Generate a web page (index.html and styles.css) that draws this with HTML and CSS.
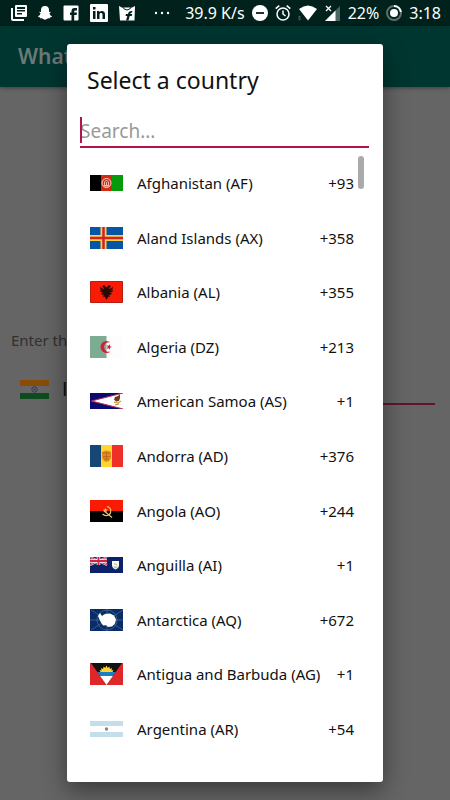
FILE: index.html
```html
<!DOCTYPE html>
<html lang="en">
<head>
<meta charset="utf-8">
<meta name="viewport" content="width=device-width, initial-scale=1">
<title>Select a country</title>
<link rel="stylesheet" href="styles.css">
</head>
<body>
<header class="status">
  <div class="notices">
    <svg width="16" height="16" viewBox="0 0 16 16"><path fill="#fff" fill-rule="evenodd" d="M5 0h10a1 1 0 0 1 1 1v10a1 1 0 0 1-1 1H5a1 1 0 0 1-1-1V1a1 1 0 0 1 1-1zm1 2v2h8V2zm0 3v1.500h8V5zm0 3v1.500h5V8z"/><path fill="none" stroke="#fff" stroke-width="2" d="M1 3v11q0 1 1 1h11"/></svg>
    <svg width="14" height="16" viewBox="0 0 14 16"><path fill="#fff" d="M7 1c3 0 4 2 4 4v2l1.500-.3c.6.4.2 1-1 1.500.3 1.600 1.200 2.500 2.500 3 .2.900-1 1-2 1.200l-.4 1c-1.200-.2-2-.1-2.800.6-1.100.9-2.500.9-3.600 0-.8-.7-1.600-.8-2.800-.6l-.4-1c-1-.2-2.200-.3-2-1.200 1.300-.5 2.200-1.400 2.500-3-1.200-.5-1.600-1.100-1-1.500L3 7V5c0-2 1-4 4-4z"/></svg>
    <svg width="16" height="16" viewBox="0 0 16 16"><rect width="15" height="15" x=".5" y=".5" rx="1" fill="#fff"/><path fill="#00211c" d="M8.500 16v-6H7V7.500h1.500V6q0-3 3-3H14v2.500h-1.500q-1.300 0-1.300 1v1H14l-.4 2.500h-2.400v6z"/></svg>
    <svg width="18" height="18" viewBox="0 0 18 18"><rect width="18" height="18" rx="1" fill="#fff"/><path fill="#00211c" d="M3 7h2.500v8H3zM3 3h2.500v2.500H3zM7 7h2.300v1.200C11 6 15 6.500 15 10v5h-2.500v-4.500c0-2-3-2-3 0V15H7z"/></svg>
    <svg width="16" height="16" viewBox="0 0 16 16"><path fill="#fff" d="M0 1l3 1.500h10L16 1l-.5 14.500H1z"/><path fill="none" stroke="#00211c" d="M3 1q2 4 5 4t5-4"/><path fill="#00211c" d="M7 15.500l1.300-4.500H6.500l.5-2h2q.5-3 3.500-3h1L13 7.500q-1.600 0-1.800 1.500h2l-.5 2h-2l-1.200 4.500z"/></svg>
    <svg class="more" width="16" height="16" viewBox="0 0 16 16"><g fill="#fff"><circle cx="2" cy="8" r="1.200"/><circle cx="8" cy="8" r="1.200"/><circle cx="14" cy="8" r="1.200"/></g></svg>
  </div>
  <div class="system">
    <span>39.9 K/s</span>
    <svg width="16" height="16" viewBox="0 0 16 16"><circle cx="8" cy="8" r="8" fill="#fff"/><path stroke="#00211c" stroke-width="1.800" d="M4 8h8"/></svg>
    <svg width="16" height="16" viewBox="0 0 16 16"><g fill="none" stroke="#fff" stroke-width="1.500"><circle cx="8" cy="9" r="6"/><path d="M8 5.500V9l2.500 2M.7 3.700l3.600-3M15.300 3.700l-3.600-3"/></g></svg>
    <svg width="20" height="16" viewBox="0 0 20 16"><path fill="#fff" d="M1 4Q10-3 19 4L10 15.500z"/><path fill="#56706c" d="M0 12.500l1.500-2 1.500 2zM0 13.500l1.500 2 1.500-2z"/></svg>
    <svg width="16" height="16" viewBox="0 0 16 16"><path fill="#4c6562" d="M15 1v15H0z"/><path fill="#fff" d="M10.500 5.500V16H0z"/><path stroke="#fff" stroke-width="1.300" d="M1 1l5 5M6 1L1 6"/></svg>
    <span>22%</span>
    <svg width="16" height="16" viewBox="0 0 16 16"><circle cx="8" cy="8" r="7" fill="none" stroke="#5c6f6c" stroke-width="2"/><path fill="none" stroke="#fff" stroke-width="2" d="M8 1a7 7 0 0 1 6.900 6"/><circle cx="8" cy="8" r="4" fill="#fff"/></svg>
    <span>3:18</span>
  </div>
</header>
<div class="appbar">WhatsApp</div>
<main class="page">
  <p class="prompt">Enter the</p>
  <div class="phone">
    <svg width="29" height="19" viewBox="0 0 29 19"><path fill="#666" d="M0 0h29v19H0z"/><path fill="#884c08" d="M0 0h29v6H0z"/><path fill="#104a20" d="M0 13h29v6H0z"/><circle cx="14.500" cy="9.500" r="2.700" fill="none" stroke="#343a55"/><circle cx="14.500" cy="9.500" r="1" fill="#343a55"/></svg>
    <span class="chosen">India</span>
    <span class="rule"></span>
  </div>
</main>

<section class="dialog" role="dialog" aria-labelledby="title">
  <h1 id="title">Select a country</h1>
  <div class="search"><input type="text" aria-label="Search countries" placeholder="Search..."><i class="caret"></i></div>
  <ul class="list">
    <li><button><svg width="33" height="16" viewBox="0 0 33 16"><path d="M0 0h11v16H0z"/><path fill="#d32a12" d="M11 0h11v16H11z"/><path fill="#069a0c" d="M22 0h11v16H22z"/><g fill="none" stroke="#fbd5cc"><circle cx="16.500" cy="8" r="4.500"/><path stroke-width=".8" d="M14.500 10.500V7l2-2 2 2v3.500zM13.500 11h6M16.500 7v3"/></g></svg><span class="name">Afghanistan (AF)</span><span>+93</span></button></li>
    <li><button><svg width="33" height="22" viewBox="0 0 33 22"><path fill="#0755a5" d="M0 0h33v22H0z"/><path stroke="#ffd044" stroke-width="6" d="M13.500 0v22M0 11h33"/><path stroke="#d2202b" stroke-width="2.500" d="M13.500 0v22M0 11h33"/></svg><span class="name">Aland Islands (AX)</span><span>+358</span></button></li>
    <li><button><svg width="33" height="22" viewBox="0 0 33 22"><path fill="#fb1b05" stroke="#b32013" d="M.5.5h32v21H.5z"/><path fill="#290805" d="M16.500 6.500L14 4l-2 1.500 2 1.500-.5 1L10 6l.5 2.500 2.500 1-3-.2.800 2 2.500.2-2 1 1 1.500 2-.5-1.500 2 2 .2 1.700 3.300 1.700-3.300 2-.2-1.500-2 2 .5 1-1.500-2-1 2.500-.2.800-2-3 .2 2.500-1L23 6l-3.500 2-.5-1 2-1.500L19 4z"/></svg><span class="name">Albania (AL)</span><span>+355</span></button></li>
    <li><button><svg width="33" height="22" viewBox="0 0 33 22"><path fill="#fdfdfd" d="M16 0h17v22H16z"/><path fill="#7dac92" d="M0 0h16.500v22H0z"/><path fill="#d5203d" d="M20.500 6.500a6 6 0 1 0 0 9 4.800 4.800 0 1 1 0-9zM22 11l-2 .8.100 2.200-1.400-1.700-2.100.6 1.200-1.900-1.200-1.800 2.100.5 1.400-1.700-.1 2.200z"/></svg><span class="name">Algeria (DZ)</span><span>+213</span></button></li>
    <li><button><svg width="33" height="16" viewBox="0 0 33 16"><path fill="#0b0870" d="M0 0h33v16H0z"/><path fill="#fff" stroke="#b83253" d="M34-.2L1.500 8 34 16.200z"/><path fill="#6d3a16" d="M25 4l3-1 2-2v4l-1 3-3 .5-2-2z"/><path fill="none" stroke="#b68624" d="M24 9l4 1 3-2M25 12l4-1"/></svg><span class="name">American Samoa (AS)</span><span>+1</span></button></li>
    <li><button><svg width="33" height="22" viewBox="0 0 33 22"><path fill="#154675" d="M0 0h11v22H0z"/><path fill="#ffd52e" d="M11 0h11v22H11z"/><path fill="#ee3028" d="M22 0h11v22H22z"/><path fill="#e48b1c" d="M12 7q4.500-3 9 0v6q-1 3-4.500 4-3.500-1-4.500-4z"/><path stroke="#b8661c" stroke-width=".8" d="M13 8h7M13 11.500h7M16.500 7v8M14 14h5"/></svg><span class="name">Andorra (AD)</span><span>+376</span></button></li>
    <li><button><svg width="33" height="22" viewBox="0 0 33 22"><path d="M0 0h33v22H0z"/><path fill="#fb1b05" d="M0 0h33v11H0z"/><g fill="none" stroke="#edc474" stroke-width="1.200"><path d="M17 6.500c5 1 5 8 0 9-2 .3-3.500-.5-4.500-1.500M13.500 10.500l8.500 7"/></g><path fill="#edc474" d="M15.500 8l.6 1.500 1.600.1-1.200 1 .4 1.600-1.400-.9-1.400.9.400-1.600-1.200-1 1.600-.1z"/></svg><span class="name">Angola (AO)</span><span>+244</span></button></li>
    <li><button><svg width="33" height="16" viewBox="0 0 33 16"><path fill="#0b2268" d="M0 0h33v16H0z"/><path stroke="#eed5df" stroke-width="2" d="M0 0l17 8M17 0L0 8"/><path stroke="#d43350" d="M0 0l17 8M17 0L0 8"/><path stroke="#fff" stroke-width="3.500" d="M8.500 0v8M0 4h17"/><path stroke="#d02440" stroke-width="2" d="M8.500 0v8M0 4h17"/><path fill="#f5f7f6" d="M22 4h7v4q0 3-3.500 4.500Q22 11 22 8z"/><path fill="#92cfd6" d="M23 9.500h5q-1 1.500-2.500 2.300Q24 11 23 9.500z"/><path stroke="#e7a04e" d="M24 6.500l3 1.500"/></svg><span class="name">Anguilla (AI)</span><span>+1</span></button></li>
    <li><button><svg width="33" height="22" viewBox="0 0 33 22"><path fill="#082d66" d="M0 0h33v22H0z"/><g fill="none" stroke="#5978a1" stroke-width=".6"><circle cx="17" cy="11" r="10"/><circle cx="17" cy="11" r="6"/><path d="M0 11h33M17 0v22M1 1l32 20M33 1L1 21"/></g><path fill="#fff" d="M10 4l2 3 3-2 5-.5 4 2 2 4-1 4-3 3-4 .5-2-2-3 .5-2-3-1.500-3L8 7z"/></svg><span class="name">Antarctica (AQ)</span><span>+672</span></button></li>
    <li><button><svg width="33" height="22" viewBox="0 0 33 22"><path fill="#df2629" d="M0 0h33v22H0z"/><path fill="#111" d="M1 0h31L16.500 22z"/><path fill="#ffd42f" d="M10.500 9l-1-2 2 .5-.5-2.500 2 1 .7-2.500 1.500 1.500 1.300-2.500 1.300 2.500 1.500-1.500.7 2.500 2-1-.5 2.500 2-.5-1 2z"/><path fill="#1680c4" d="M7.300 9h18.400L22.900 13H10.100z"/><path fill="#fff" d="M10.100 13h12.800L16.500 22z"/></svg><span class="name">Antigua and Barbuda (AG)</span><span>+1</span></button></li>
    <li><button><svg width="33" height="16" viewBox="0 0 33 16"><path fill="#fff" d="M0 0h33v16H0z"/><path fill="#c5deeb" d="M0 0h33v5H0zM0 11h33v5H0z"/><circle cx="16.500" cy="8" r="1.700" fill="#928767"/></svg><span class="name">Argentina (AR)</span><span>+54</span></button></li>
  </ul>
</section>
</body>
</html>
```

FILE: styles.css
```css
* { box-sizing: border-box; }

body {
  margin: 0;
  min-height: 100vh;
  background: #656565;
  color: #111;
  font-family: "Noto Sans", sans-serif;
  font-size: 15px;
}

svg { display: block; flex: none; }

.status {
  display: flex;
  justify-content: space-between;
  align-items: center;
  height: 26px;
  padding: 0 9px 0 11px;
  background: #00211c;
  color: #fff;
  font-size: 16px;
  white-space: nowrap;
}

.notices { display: flex; align-items: center; gap: 11px; }
.more { margin-left: 8px; }
.system { display: flex; align-items: center; gap: 7px; }

.appbar {
  height: 61px;
  padding: 0 18px;
  background: #003630;
  box-shadow: 0 1px 4px rgba(0, 0, 0, .4);
  color: #6b7977;
  font-size: 21px;
  font-weight: 600;
  line-height: 61px;
}

.page { padding: 240px 15px 0 11px; }
.prompt { margin: 0; color: #303030; line-height: 26px; }
.phone { display: flex; align-items: center; margin-top: 20px; padding-left: 9px; gap: 13px; }
.chosen { font: 20px/32px "Liberation Sans", sans-serif; }
.rule {
  flex: 1;
  align-self: flex-end;
  height: 2px;
  background: #62142f;
}

.dialog {
  position: absolute;
  inset: 44px 67px 18px;
  display: flex;
  flex-direction: column;
  padding: 16px 14px 26px 13px;
  background: #fff;
  border-radius: 3px;
  box-shadow: 0 8px 24px rgba(0, 0, 0, .45);
}

h1 {
  margin: 0;
  padding-left: 7px;
  font-size: 23px;
  font-weight: 400;
  line-height: 40px;
}

.search { position: relative; margin-top: 16px; }
.search input {
  display: block;
  width: 100%;
  height: 32px;
  padding: 0;
  border: 0;
  border-bottom: 2px solid #b3124f;
  outline: 0;
  background: none;
  font: 19px "Noto Sans", sans-serif;
}
.search input::placeholder { color: #999; opacity: 1; }
.caret {
  position: absolute;
  left: 0;
  top: 1px;
  width: 2px;
  height: 26px;
  background: #b3124f;
}

.list {
  position: relative;
  flex: 1;
  display: grid;
  grid-auto-rows: 1fr;
  margin: 8px 0 0;
  padding: 0;
  list-style: none;
}
.list::after {
  content: "";
  position: absolute;
  top: 0;
  right: 5px;
  width: 6px;
  height: 33px;
  border-radius: 3px;
  background: #aaa;
}
.list li { display: grid; }
.list button {
  display: flex;
  align-items: center;
  gap: 14px;
  padding: 0 15px 0 10px;
  border: 0;
  background: none;
  color: #111;
  font: inherit;
  white-space: nowrap;
}
.name { flex: 1; text-align: left; }
```
